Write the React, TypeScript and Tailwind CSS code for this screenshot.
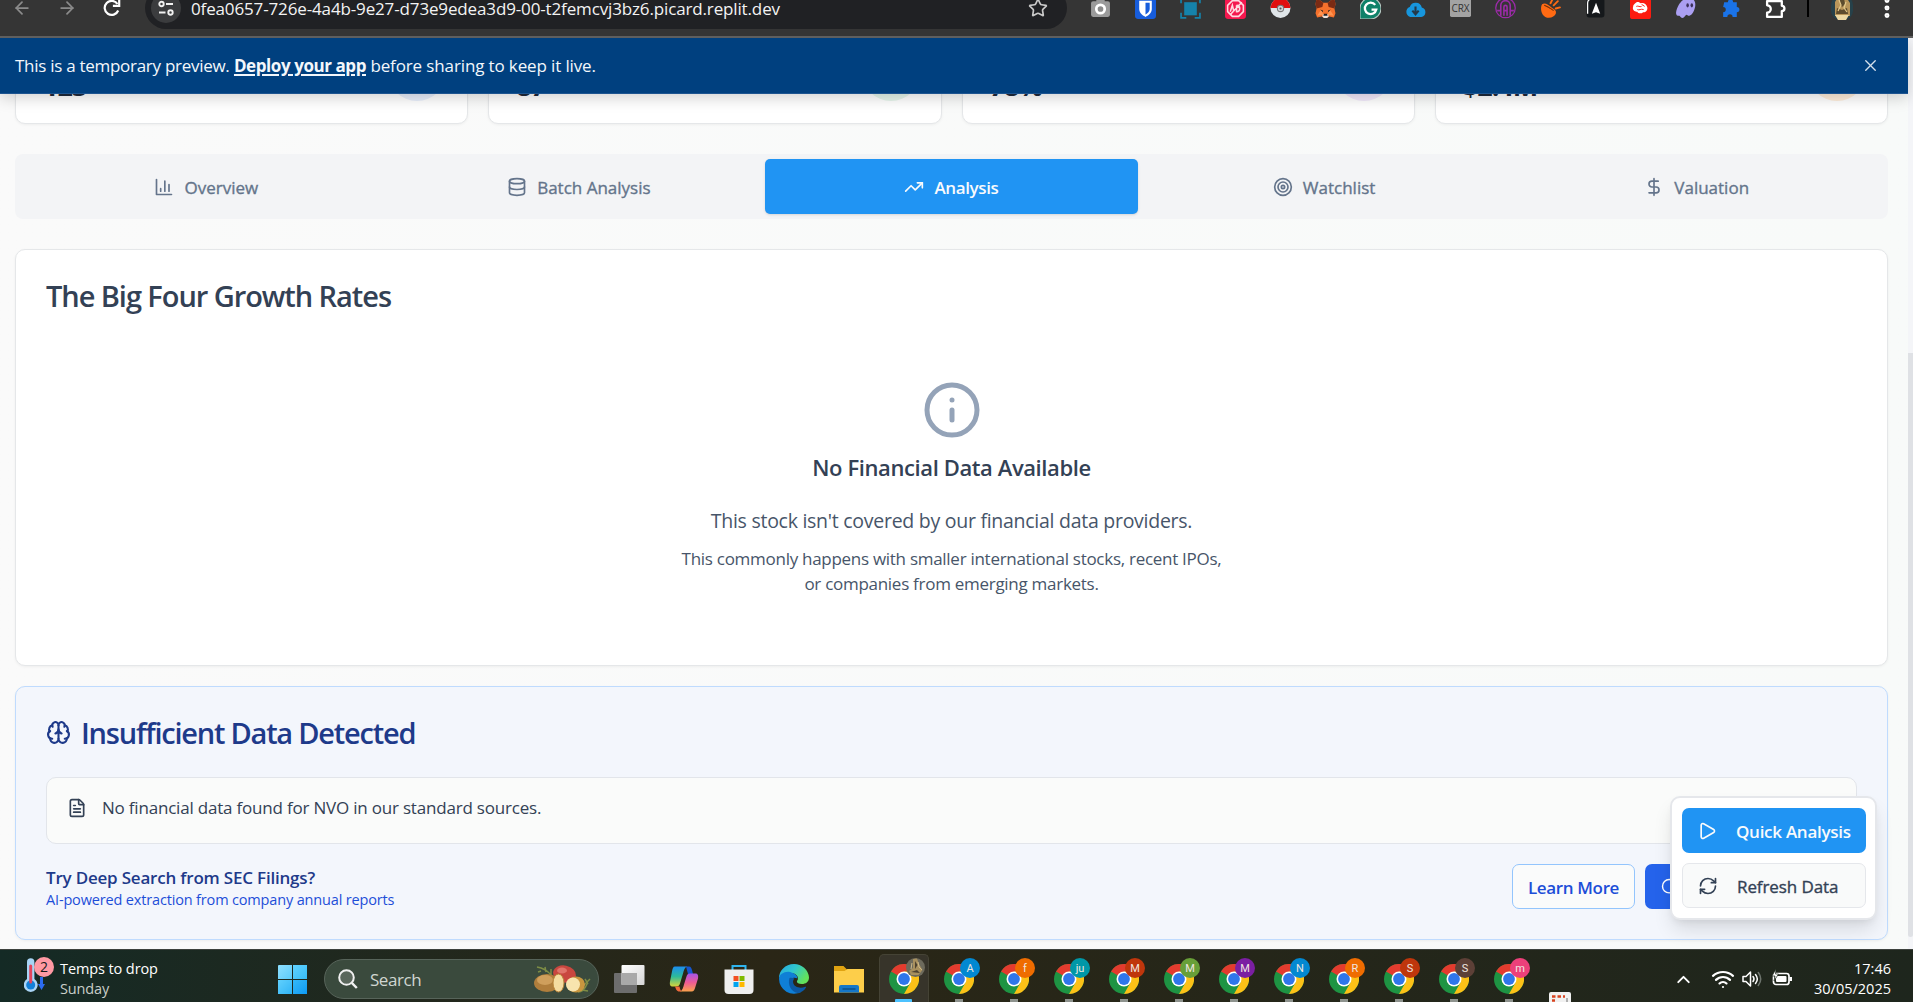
import React from "react";
import {
  ArrowLeft, ArrowRight, Brain, Database, DollarSign, FileText, Info, Play, RefreshCw,
  Search, Star, Target, TrendingUp, Wifi, X, ChevronUp, EllipsisVertical,
} from "lucide-react";

/* ---------- Browser toolbar ---------- */

const extensionIcons: React.ReactNode[] = [
  <g key="camera">
    <rect x="1" y="3" width="18" height="15" rx="2" fill="#9b9b9b" />
    <rect x="6" y="0" width="8" height="5" rx="1.5" fill="#9b9b9b" />
    <circle cx="10" cy="10.5" r="4" fill="#8a8a8a" stroke="#fff" strokeWidth="2.6" />
  </g>,
  <g key="shield">
    <rect x="0" y="0" width="20" height="20" rx="3" fill="#175ddc" />
    <path d="M4 2.5h12v8c0 4-3.5 6.2-6 7.5-2.500-1.300-6-3.500-6-7.500z" fill="#fff" />
    <path d="M10 4.500h4v6c0 2.500-2 4-4 5.200z" fill="#175ddc" />
  </g>,
  <g key="focus">
    <rect x="4" y="4" width="12" height="12.500" fill="#1583ab" />
    <path d="M1 5V1h5M8 1h4M14 1h5v4M1 14v5h5M14 19h5v-5" fill="none" stroke="#1583ab" strokeWidth="1.600" />
  </g>,
  <g key="ad">
    <rect width="20" height="20" rx="3" fill="#f5184f" />
    <path d="M7 2.500h6l4.500 4.500v6L13 17.500H7L2.500 13V7z" fill="none" stroke="#ffd9e1" strokeWidth="1.500" />
    <path d="M5 13l2-6 1.500 6M11 7v6c4 .5 4-6 0-6M5 16L16 4" fill="none" stroke="#ffd9e1" strokeWidth="1.500" />
  </g>,
  <g key="ball">
    <circle cx="10" cy="9.500" r="9.500" fill="#dfe5e8" />
    <path d="M.5 9.500a9.500 9.500 0 0 1 19 0z" fill="#e00f0f" />
    <circle cx="10" cy="10" r="3" fill="#cfd3d6" stroke="#777" />
    <circle cx="10" cy="10" r="1" fill="#555" />
  </g>,
  <g key="fox">
    <path d="M1.500 0L8 4.500h4L18.500 0l1 6-1 4 1 4.500-1.500 4-4.500-1-2 1.500h-3l-2-1.500-4.500 1-1.500-4L1.500 10l-1-4z" fill="#f5712c" />
    <path d="M1.500 0L8 4.500l-1 4-5.500 1.500-1-4zM18.500 0L12 4.500l1 4 5.500 1.500 1-4z" fill="#7a2b14" />
    <path d="M2 17l4-6 2 5zM18 17l-4-6-2 5z" fill="#ff9350" />
    <path d="M7.500 15.500h5l.5 2-1.500 1.500h-3L7 17.500z" fill="#e9e4e0" />
    <path d="M8.500 15h3l.5 2H8z" fill="#1e1e1e" />
    <path d="M5 11l2.500 1v1.500zM15 11l-2.500 1v1.500z" fill="#222" />
  </g>,
  <g key="grammar">
    <path d="M10 0a10 10 0 0 1 0 20H0V10A10 10 0 0 1 10 0z" fill="#0f8169" stroke="#b9c9c4" />
    <path d="M14.500 6.500a5.500 5.500 0 1 0 1 4.500h-4.500" fill="none" stroke="#fff" strokeWidth="2.200" />
  </g>,
  <g key="cloud">
    <path d="M5 18a5 5 0 0 1-.5-9.500A6 6 0 0 1 16 9a4.600 4.600 0 0 1-.5 9z" fill="#1796dd" />
    <path d="M10 8v7M7 12l3 3.500 3-3.500" fill="none" stroke="#23394a" strokeWidth="2" />
  </g>,
  <g key="crx">
    <rect y="0" width="20" height="18" rx="1.500" fill="#a3a3a3" />
    <text x="10" y="13" fontSize="9.500" textAnchor="middle" fill="#333">CRX</text>
  </g>,
  <g key="gate" fill="none" stroke="#9c2ba8">
    <circle cx="10" cy="9.500" r="9.300" strokeWidth="1.200" />
    <path d="M5.500 17V7a4.500 4.500 0 0 1 9 0v10M8.500 17V8.500a1.500 1.500 0 0 1 3 0V17M2 12h3.500M8.500 12h3M14.500 12H18" strokeWidth="1.500" />
  </g>,
  <g key="comet">
    <path d="M2 6c3-2 6 1 9 3s5 3 4 6-6 5-10 3-5-9-3-12z" fill="#ff6a13" />
    <path d="M10 5l2-4M13 7l4-4M15 10l4-1" stroke="#ff6a13" strokeWidth="1.800" strokeLinecap="round" />
    <path d="M4 7c3 1 6 3 9 5" stroke="#7a3208" strokeWidth="1" />
  </g>,
  <g key="a">
    <rect x="1.500" y="0" width="17" height="18.500" rx="2.500" fill="#15181b" />
    <path d="M2.500 15V5c0-2 1-4 4-4h9" fill="none" stroke="#fff" strokeWidth="1.200" />
    <path d="M10.500 4.500l4 10.500-4-1.500-4 1.500z" fill="#fff" />
  </g>,
  <g key="brain">
    <rect width="20" height="20" rx="2.500" fill="#fb1c10" />
    <path d="M5 5c2-2 4-1 5 0 3-1 6 1 6.500 4s-2 5-4 4.500c-2 2-5 1-5.500-.5-3 0-5-2-4-5 0-1 1-2 2-3z" fill="#fff" />
    <path d="M6 8c2-1 3 1 5 0m-4 3c2 1 3-1 6 0m-2-5l3 2" fill="none" stroke="#fb1c10" strokeWidth=".9" />
  </g>,
  <g key="ghost">
    <path d="M1 14C2 7 7 0 13 0c6 0 7 5 6 9-1 5-4 8-6 8-1 0-1-1-2-1s-2 3-4 3-2-2-3-2-3 0-3-3z" fill="#ab9ff2" />
    <ellipse cx="12" cy="7" rx="1.200" ry="2" fill="#3c315b" />
    <ellipse cx="16" cy="7" rx="1.200" ry="2" fill="#3c315b" />
  </g>,
  <path key="puzzle" d="M4 4h3.500a2.500 2.500 0 1 1 5 0H16v4.500a2.500 2.500 0 1 1 0 5V18h-4a2.500 2.500 0 0 0-5 0H3v-4.500a2.500 2.500 0 0 0 0-5z" fill="#1a73e8" />,
  <path key="ext" d="M2 3h14v4.500a2.500 2.500 0 0 1 0 5V18H2v-4a3.300 3.300 0 0 0 0-7z" fill="none" stroke="#fff" strokeWidth="2.200" strokeLinejoin="round" />,
];

function Toolbar() {
  return (
    <header className="relative z-20 h-[38px] overflow-hidden border-b-2 border-[#5f5f5f] bg-[#353535]">
      <div className="flex h-4 items-center">
        <ArrowLeft className="ml-[12px] size-[20px] text-[#8b8b8b]" strokeWidth={2.1} />
        <ArrowRight className="ml-[25px] size-[20px] text-[#8b8b8b]" strokeWidth={2.1} />
        <svg className="ml-[25px] size-[20px]" viewBox="0 0 20 20" fill="none" stroke="#fff" strokeWidth="2.200">
          <path d="M16.200 12.500A7 7 0 1 1 15.500 6" />
          <path d="M17.200 1.500v6.300h-6.300" />
        </svg>
        <div className="ml-[23px] flex h-[42px] w-[922px] shrink-0 items-center rounded-[21px] bg-[#202124] pl-[6px]">
          <div className="flex size-[30px] items-center justify-center rounded-full bg-[#3b3c3e]">
            <svg className="size-[16px]" viewBox="0 0 16 16" fill="none" stroke="#f1f1f1" strokeWidth="1.900">
              <circle cx="3.500" cy="4" r="2.200" />
              <path d="M8 4h7M1 12.500h6.500" />
              <circle cx="12.500" cy="12.500" r="2.200" />
            </svg>
          </div>
          <span className="ml-[10px] pt-[2px] text-[17px] leading-[20px] tracking-[-0.14px] whitespace-nowrap text-[#f3f3f3]">
            0fea0657-726e-4a4b-9e27-d73e9edea3d9-00-t2femcvj3bz6.picard.replit.dev
          </span>
          <Star className="mr-[19px] ml-auto size-[20px] text-[#c9c9c9]" strokeWidth={2} />
        </div>
        <div className="ml-[11px] flex">
          {extensionIcons.map((icon, i) => (
            <div key={i} className="flex w-[45px] justify-center">
              <svg className="size-[21px]" viewBox="0 0 20 20">{icon}</svg>
            </div>
          ))}
        </div>
        <div className="ml-[9px] h-[18px] w-[2px] bg-black" />
        <svg className="ml-[22px] h-[24px] w-[22px] shrink-0" viewBox="0 0 22 24">
          <rect width="22" height="24" rx="9" fill="#26414a" />
          <path d="M4 20V6l3-5h8l4 6v13z" fill="#b8965a" />
          <path d="M9 2h4l1 6-3 3-2-4zM6 12l5 2 5-2 1 6H5z" fill="#5c4c2e" />
          <path d="M8 4l2 5-3 6M15 6l-2 6 3 4" fill="none" stroke="#e2c98c" strokeWidth="1.200" />
          <path d="M4 19h14l-3 5H7z" fill="#ecd9a4" />
        </svg>
        <EllipsisVertical className="ml-[21px] size-[26px] shrink-0 text-white" strokeWidth={2.600} />
      </div>
    </header>
  );
}

/* ---------- Dashboard page ---------- */

const stats = [
  { value: "123", tint: "bg-[#e8effc]" },
  { value: "87", tint: "bg-[#e6f6ec]" },
  { value: "78%", tint: "bg-[#f3eafc]" },
  { value: "$2.4M", tint: "bg-[#ffeedb]" },
];

function BarsIcon({ className }: { className?: string }) {
  return (
    <svg className={className} viewBox="0 0 24 24" fill="none" stroke="currentColor" strokeWidth="2" strokeLinecap="round" strokeLinejoin="round">
      <path d="M3 3v18h18M18 17V9M13 17V5M8 17v-3" />
    </svg>
  );
}

const tabs = [
  { label: "Overview", Icon: BarsIcon, active: false },
  { label: "Batch Analysis", Icon: Database, active: false },
  { label: "Analysis", Icon: TrendingUp, active: true },
  { label: "Watchlist", Icon: Target, active: false },
  { label: "Valuation", Icon: DollarSign, active: false },
];

function Banner() {
  return (
    <div className="relative z-10 flex h-[56px] items-center border-b border-[#1d5490] bg-[#00407f] pl-[15px] text-[17px] text-[#f3f7fb] shadow-[0_4px_14px_rgba(0,0,0,0.18)]">
      <p className="whitespace-nowrap">
        <span className="tracking-[-0.280px]">This is a temporary preview.</span>{" "}
        <a className="font-bold tracking-[-0.430px] underline decoration-[1.500px] underline-offset-2">Deploy your app</a>{" "}
        <span className="tracking-[-0.130px]">before sharing to keep it live.</span>
      </p>
      <X className="mr-[28px] ml-auto size-[19px] text-[#d5e0ec]" strokeWidth={1.700} />
    </div>
  );
}

function GrowthCard() {
  return (
    <section className="mt-[30px] h-[417px] rounded-[10px] border border-[#e5e7e9] bg-white px-[30px] pt-[31px] shadow-[0_1px_3px_rgba(0,0,0,0.05)]">
      <h2 className="text-[29px] leading-[30px] font-semibold tracking-[-1.060px] text-[#334155]">The Big Four Growth Rates</h2>
      <div className="mt-[69px] flex flex-col items-center">
        <Info className="size-[60px] text-[#94a3b8]" />
        <h3 className="mt-[10px] text-[22px] leading-[35px] font-semibold tracking-[-0.400px] text-[#334155]">No Financial Data Available</h3>
        <p className="mt-[21px] text-[19.500px] leading-[30px] tracking-[-0.270px] text-[#475569]">
          This stock isn't covered by our financial data providers.
        </p>
        <p className="mt-[10px] text-center text-[17px] leading-[25px] tracking-[-0.280px] text-[#475569]">
          This commonly happens with smaller international stocks, recent IPOs,<br />
          or companies from emerging markets.
        </p>
      </div>
    </section>
  );
}

function InsufficientCard() {
  return (
    <section className="mt-[20px] h-[254px] rounded-[10px] border border-[#bfdbfe] bg-[#f3f6fc] px-[30px] pt-[30px] shadow-[0_1px_3px_rgba(0,0,0,0.05)]">
      <h2 className="flex h-[30px] items-center gap-[10px] text-[29px] leading-[30px] font-semibold tracking-[-1.230px] text-[#1e3a8a]">
        <Brain className="size-[25px]" />
        <span className="pt-[2px]">Insufficient Data Detected</span>
      </h2>
      <div className="mt-[30px] flex h-[67px] rounded-[10px] border border-[#e2e5ea] bg-[#fafbfa] pt-[17px] pl-[20px]">
        <FileText className="mt-[3px] size-[20px] text-[#334155]" />
        <p className="ml-[15px] text-[17px] leading-[25px] tracking-[-0.200px] text-[#334155]">
          No financial data found for NVO in our standard sources.
        </p>
      </div>
      <div className="mt-[20px] flex h-[45px] items-stretch">
        <div className="flex flex-col pt-px">
          <p className="text-[17px] leading-[25px] font-semibold tracking-[-0.200px] text-[#1e3a8a]">Try Deep Search from SEC Filings?</p>
          <p className="text-[14.500px] leading-[20px] tracking-[-0.160px] text-[#1d4ed8]">AI-powered extraction from company annual reports</p>
        </div>
        <button className="ml-auto w-[123px] rounded-[7px] border border-[#93c5fd] bg-[#fafbfb] pt-[2px] text-[17px] font-semibold tracking-[-0.350px] text-[#1d4ed8]">
          Learn More
        </button>
        <button className="ml-[10px] flex w-[212px] items-center rounded-[7px] bg-[#2563eb] pl-[15px] text-white">
          <Search className="size-[20px]" strokeWidth={1.700} />
        </button>
      </div>
    </section>
  );
}

function QuickActions() {
  return (
    <div className="absolute right-[36px] bottom-[29px] flex h-[124px] w-[207px] flex-col gap-[10px] rounded-[10px] border-2 border-[#e5e7eb] bg-white pt-[10px] pr-[9px] pl-[10px] shadow-[0_12px_20px_-3px_rgba(0,0,0,0.12),0_4px_8px_-4px_rgba(0,0,0,0.1)]">
      <button className="flex h-[45px] items-center rounded-[7px] bg-[#2094f3] pl-[15px] text-[17px] font-semibold tracking-[-0.270px] text-[#f8fafc]">
        <Play className="size-[20px]" strokeWidth={2} />
        <span className="ml-[19px] pt-[2px]">Quick Analysis</span>
      </button>
      <button className="flex h-[45px] items-center rounded-[7px] border border-[#e5e7eb] bg-[#f9fafa] pl-[15px] text-[17px] text-[#334155]">
        <RefreshCw className="size-[20px]" strokeWidth={2} />
        <span className="ml-[19px] pt-[2px] tracking-[-0.100px] [-webkit-text-stroke:0.350px]">Refresh Data</span>
      </button>
    </div>
  );
}

function Dashboard() {
  return (
    <main className="relative flex h-[911px] bg-[#f4f5f8]">
      <div className="flex w-[1908px] flex-col bg-linear-to-r from-[#fafafa] to-[#f8faf9]">
        <Banner />
        <div className="pr-[20px] pl-[15px]">
          <div className="grid h-[30px] grid-cols-4 grid-rows-[30px] items-end gap-[20px]">
            {stats.map(({ value, tint }) => (
              <div key={value} className="flex h-[62px] items-end justify-between rounded-[10px] border border-[#e5e7e9] bg-white pr-[21px] pb-[22px] pl-[27px] shadow-[0_1px_3px_rgba(0,0,0,0.05)]">
                <span className="text-[27px] leading-[30px] font-bold tracking-[-1px] text-[#1e293b]">{value}</span>
                <span className={`h-[38px] w-[58px] rounded-b-[29px] ${tint}`} />
              </div>
            ))}
          </div>
          <nav className="mt-[30px] grid h-[65px] grid-cols-5 rounded-[8px] bg-[#f3f4f6] p-[5px]">
            {tabs.map(({ label, Icon, active }) => (
              <button
                key={label}
                className={
                  active
                    ? "flex items-center justify-center gap-[10px] rounded-[5px] bg-[#2094f3] text-[17px] font-semibold tracking-[-0.370px] text-[#f8fafc] shadow-sm"
                    : "flex items-center justify-center gap-[10px] rounded-[5px] text-[17px] text-[#64748b] [-webkit-text-stroke:0.350px]"
                }
              >
                <Icon className="size-[20px]" />
                <span className="pt-[2px]">{label}</span>
              </button>
            ))}
          </nav>
          <GrowthCard />
          <InsufficientCard />
        </div>
      </div>
      <div className="flex w-[5px] flex-col">
        <div className="mt-[315px] h-[584px] rounded-b-[3px] bg-[#dfe1e5]" />
      </div>
      <QuickActions />
    </main>
  );
}

/* ---------- Taskbar ---------- */

function ChromeIcon() {
  return (
    <svg className="size-[30px]" viewBox="0 0 30 30">
      <circle cx="15" cy="15" r="15" fill="#1e9443" />
      <path d="M15 15L2 7.500A15 15 0 0 1 28 7.500H15z" fill="#e33b2e" />
      <path d="M15 30L21.500 18.500 15 7.500h13A15 15 0 0 1 15 30z" fill="#fcc117" />
      <circle cx="15" cy="15" r="7.500" fill="#fff" />
      <circle cx="15" cy="15" r="5.900" fill="#2f76ea" />
    </svg>
  );
}

const profiles = [
  { letter: "A", color: "bg-[#0288d1]" },
  { letter: "f", color: "bg-[#ef6c00]" },
  { letter: "ju", color: "bg-[#0097a7]" },
  { letter: "M", color: "bg-[#bf360c]" },
  { letter: "M", color: "bg-[#689f38]" },
  { letter: "M", color: "bg-[#7b1fa2]" },
  { letter: "N", color: "bg-[#0288d1]" },
  { letter: "R", color: "bg-[#ef6c00]" },
  { letter: "S", color: "bg-[#bf360c]" },
  { letter: "S", color: "bg-[#5d4037]" },
  { letter: "m", color: "bg-[#ec407a]" },
];

const pinnedApps: React.ReactNode[] = [
  <svg key="taskview" className="size-[31px]" viewBox="0 0 31 31">
    <rect x="0" y="9" width="23" height="20" rx="1" fill="#6d6d6d" />
    <rect x="7.500" y="1" width="23" height="20" rx="1" fill="url(#taskviewFill)" />
    <rect x="7.500" y="9" width="15.500" height="12" fill="#a9a9a9" />
    <defs>
      <linearGradient id="taskviewFill" x1="0" y1="0" x2="1" y2="1">
        <stop offset="0" stopColor="#fff" />
        <stop offset="1" stopColor="#d5d5d5" />
      </linearGradient>
    </defs>
  </svg>,
  <svg key="copilot" className="size-[30px]" viewBox="0 0 30 30">
    <defs>
      <linearGradient id="copilotLeft" x1="0" y1="0" x2="0" y2="1">
        <stop offset="0" stopColor="#1b8df0" />
        <stop offset=".5" stopColor="#2dbb9a" />
        <stop offset="1" stopColor="#d6d43a" />
      </linearGradient>
      <linearGradient id="copilotRight" x1="0" y1="0" x2="0" y2="1">
        <stop offset="0" stopColor="#a454e8" />
        <stop offset=".5" stopColor="#ee5b95" />
        <stop offset="1" stopColor="#fba24c" />
      </linearGradient>
    </defs>
    <path d="M17 2.500h3c2 0 2.500 2 3 3.500l1 4h-5z" fill="#1556cf" />
    <path d="M6 2.500h12c-2.500 1-3.200 4-4 7l-3 10c-.6 2-1.500 3-4 3H4c-3 0-3.500-2-3-5L3 7.500c.6-3 1-5 3-5z" fill="url(#copilotLeft)" />
    <path d="M24 9.500h2c3 0 3.500 2 3 5l-2.500 8c-.8 3-1.500 5-4 5H11c2.500-1 3.200-4 4-7l2.500-8c.6-2 1.500-3 3.500-3z" fill="url(#copilotRight)" />
    <path d="M6 22.500h4.500c.5 2 .8 3.500 2 5h-2c-3 0-3.500-2.500-4.500-5z" fill="#f06a3c" />
  </svg>,
  <svg key="store" className="size-[30px]" viewBox="0 0 30 30">
    <path d="M8.500 7V2h13v5" fill="none" stroke="#2fb4ee" strokeWidth="2" />
    <path d="M.5 5.500h29V26a4 4 0 0 1-4 4h-21a4 4 0 0 1-4-4z" fill="#efefef" />
    <path d="M9.500 12h5v5h-5z" fill="#f25022" />
    <path d="M15.500 12h5v5h-5z" fill="#7fba00" />
    <path d="M9.500 18h5v5h-5z" fill="#00a4ef" />
    <path d="M15.500 18h5v5h-5z" fill="#ffb900" />
  </svg>,
  <svg key="edge" className="size-[30px]" viewBox="0 0 30 30">
    <defs>
      <linearGradient id="edgeTop" x1="0" y1="0" x2="1" y2=".5">
        <stop offset="0" stopColor="#26a5e0" />
        <stop offset=".5" stopColor="#2fc6cf" />
        <stop offset="1" stopColor="#63e25b" />
      </linearGradient>
    </defs>
    <path d="M15 0a15 15 0 0 1 15 13.500c0 4.500-3.500 6.500-7 6.500-4 0-5.500-1.500-5-3 2-2 1-6-3-7.500C9 7.500 3 9 0 14 0 7 6 0 15 0z" fill="url(#edgeTop)" />
    <path d="M0 15c0-5 6-8 11-7 4 .8 7.500 3.500 7.500 6.500-5-2-8 1-7.500 5.500.6 5.500 6 8.500 11 8a15 15 0 0 1-22-13z" fill="#0f7fd6" />
    <path d="M10.500 14c-2 6 1 14 9 15.200 3-.9 6-3 7.500-5.700.3-.6-.3-1-.9-.7-5 2-11 .5-12-4.300-.3-1.600.4-3 1.400-4-2-1-4-1-5-.5z" fill="#0c59a4" />
  </svg>,
  <svg key="folder" className="size-[30px]" viewBox="0 0 30 30">
    <path d="M0 2h9.500l3.500 3.500h17V20H0z" fill="#e0a311" />
    <path d="M0 7h10.500l3-2H30v23.500H0z" fill="#fdce4a" />
    <path d="M5 28.500V23a2 2 0 0 1 2-2h16a2 2 0 0 1 2 2v5.500z" fill="#1577c8" />
    <path d="M8.500 25h13" stroke="#0b4f8a" strokeWidth="1.500" />
  </svg>,
];

function AppCell({ children }: { children: React.ReactNode }) {
  return <div className="flex w-[55px] shrink-0 justify-center pt-[14px]">{children}</div>;
}

function Taskbar() {
  return (
    <footer className="flex h-[53px] overflow-hidden border-t border-[#3d423d] bg-linear-to-r from-[#142a25] via-[#2a2616] via-40% to-[#1e261d] text-white">
      <div className="flex w-[264.500px] shrink-0 pl-[24px]">
        <svg className="mt-[5px] h-[38px] w-[31px]" viewBox="0 0 31 38">
          <path d="M3 7a3.700 3.700 0 0 1 7.400 0v17a7 7 0 1 1-7.400 0z" fill="#a9d4f5" />
          <circle cx="6.700" cy="30" r="4.500" fill="#1380d8" />
          <path d="M6.700 11v16" stroke="#e2445c" strokeWidth="3" strokeLinecap="round" />
          <path d="M16 22v7h-2l3.500 6 3.500-6h-2v-7z" fill="#2c6cf0" />
          <circle cx="20" cy="12" r="10" fill="#ff99a4" />
          <text x="20" y="17" fontSize="14" textAnchor="middle" fill="#1a1a1a">2</text>
        </svg>
        <div className="ml-[5px] pt-[9px] text-[14.500px] leading-[20px] whitespace-nowrap">
          <p className="tracking-[-0.100px]">Temps to drop</p>
          <p className="tracking-[-0.150px] text-[#c9cec9]">Sunday</p>
        </div>
      </div>
      <AppCell>
        <div className="mt-[1px] grid size-[29px] grid-cols-2 gap-[1px]">
          <span className="rounded-tl-[1px] bg-linear-to-br from-[#8de0ff] to-[#5acbfa]" />
          <span className="bg-linear-to-br from-[#5fd2ff] to-[#35bdf8]" />
          <span className="bg-linear-to-br from-[#5fd0fd] to-[#2eb4f6]" />
          <span className="bg-linear-to-br from-[#33b8f8] to-[#0b9bf5]" />
        </div>
      </AppCell>
      <div className="mt-[9px] ml-[4.500px] flex h-[40px] w-[275px] shrink-0 items-center rounded-full border border-[#57645a] bg-[#3a4a3d] pl-[13px]">
        <svg className="size-[20px]" viewBox="0 0 20 20" fill="#5a675c" stroke="#f0f0f0" strokeWidth="2">
          <circle cx="8.500" cy="8.500" r="7.300" />
          <path d="M13.800 13.800L18.800 19" strokeWidth="2.400" />
        </svg>
        <span className="ml-[12px] pt-px text-[17px] tracking-[-0.450px] text-[#d0d6d1]">Search</span>
        <svg className="mr-[6px] ml-auto h-[30px] w-[59px]" viewBox="0 0 59 30">
          <path d="M4 3c6 1 10 3 14 8M8 7l-3 1M12 3l1 5M18 5l0 6M50 22l7-7M45 28c4 0 7-3 9-8M52 15l3 5M49 26l6 1" fill="none" stroke="#7d8c45" strokeWidth="1.500" />
          <ellipse cx="31.500" cy="10" rx="11.500" ry="8.500" fill="#c9473f" transform="rotate(12 31.500 10)" />
          <ellipse cx="29" cy="6.500" rx="5" ry="3" fill="#e0746a" />
          <ellipse cx="14" cy="19" rx="13" ry="9" fill="#b07e3c" />
          <ellipse cx="12" cy="16" rx="8" ry="5" fill="#cf9f5c" />
          <ellipse cx="25.500" cy="19" rx="5.500" ry="9" fill="#f5dca0" stroke="#b88338" />
          <ellipse cx="43" cy="20.500" rx="9" ry="8" fill="#c8963f" />
          <ellipse cx="40" cy="20.500" rx="7" ry="7" fill="#f8e4ae" />
        </svg>
      </div>
      <div className="ml-[2.500px] flex">
        {pinnedApps.map((app, i) => <AppCell key={i}>{app}</AppCell>)}
        <div className="mt-[4px] ml-[2px] flex w-[50px] shrink-0 flex-col items-center rounded-t-[5px] border border-b-0 border-[#454335] bg-[#37342a] pt-[9px]">
          <div className="relative h-[30px]">
            <ChromeIcon />
            <svg className="absolute -top-[6px] left-[17px] size-[19px]" viewBox="0 0 19 19">
              <circle cx="9.500" cy="9.500" r="9.500" fill="#6d6a5c" />
              <path d="M7 1l4-.5 2 5.500 3.500 6-4 5H5l-2-4 4-3z" fill="#a8905e" />
              <path d="M9 3l2.500 4L9 11zM5 14l6-2 3 3z" fill="#4d4230" />
              <path d="M12 4l1 5 3 3M6 5L5 11" fill="none" stroke="#cdb98a" />
            </svg>
          </div>
          <span className="mt-[5px] h-[4px] w-[17px] rounded-t-[1px] bg-[#4cc2ff]" />
        </div>
        <div className="ml-[3px] flex">
          {profiles.map(({ letter, color }, i) => (
            <div key={i} className="flex w-[55px] shrink-0 flex-col items-center pt-[14px]">
              <div className="relative h-[30px]">
                <ChromeIcon />
                <span className={`absolute -top-[6px] left-[16px] flex size-[20px] items-center justify-center rounded-full font-[Roboto] text-[11px] leading-none text-[#f0e6e0] ${color}`}>
                  {letter}
                </span>
              </div>
              <span className="mt-[5px] h-[3px] w-[8px] bg-[#8e938e]" />
            </div>
          ))}
        </div>
        <svg className="mt-[42px] ml-[12px] h-[11px] w-[22px]" viewBox="0 0 22 11">
          <path d="M0 11V2a2 2 0 0 1 2-2h18a2 2 0 0 1 2 2v9z" fill="#f1f1f1" />
          <path d="M3 4.500h3.500M8.500 4.500H12M14 4.500h2M3 8.500h3" stroke="#d8431f" strokeWidth="2.600" />
          <path d="M18 6v5" stroke="#9a9a9a" strokeWidth="1.500" />
        </svg>
      </div>
      <div className="ml-auto flex pr-[22px]">
        <ChevronUp className="mt-[19px] size-[21px]" strokeWidth={2.200} />
        <Wifi className="mt-[17px] ml-[17px] size-[24px]" strokeWidth={2.200} />
        <svg className="mt-[19px] ml-[7px] size-[20px]" viewBox="0 0 20 20" fill="none" stroke="#fff" strokeWidth="1.500" strokeLinecap="round" strokeLinejoin="round">
          <path d="M1 7.500h3L8.500 3v14L4 12.500H1zM11 7.500c1.200 1.500 1.200 3.500 0 5M13.500 5.500c2.200 2.700 2.200 6.300 0 9" />
          <path d="M16.300 3.500c3 4 3 9 0 13" stroke="#6d746d" />
        </svg>
        <svg className="mt-[19px] ml-[10px] h-[18px] w-[21px]" viewBox="0 0 21 18">
          <rect x="1.500" y="4.500" width="15.500" height="11" rx="2.500" fill="none" stroke="#fff" strokeWidth="1.700" />
          <rect x="4" y="7" width="10.500" height="6" rx="1" fill="#fff" />
          <path d="M17.500 8h2.500v4h-2.500z" fill="#fff" />
          <path d="M4 0L0 7h3l-1 5 4.500-7H3.500z" fill="#fff" stroke="#1d2a1c" strokeWidth=".7" />
        </svg>
        <div className="ml-[20px] w-[78px] pt-[9px] text-right text-[14.500px] leading-[20px] whitespace-nowrap">
          <p>17:46</p>
          <p>30/05/2025</p>
        </div>
      </div>
    </footer>
  );
}

export default function App() {
  return (
    <div className="h-[1002px] w-[1913px] overflow-hidden font-['Open_Sans',sans-serif]">
      <Toolbar />
      <Dashboard />
      <Taskbar />
    </div>
  );
}
